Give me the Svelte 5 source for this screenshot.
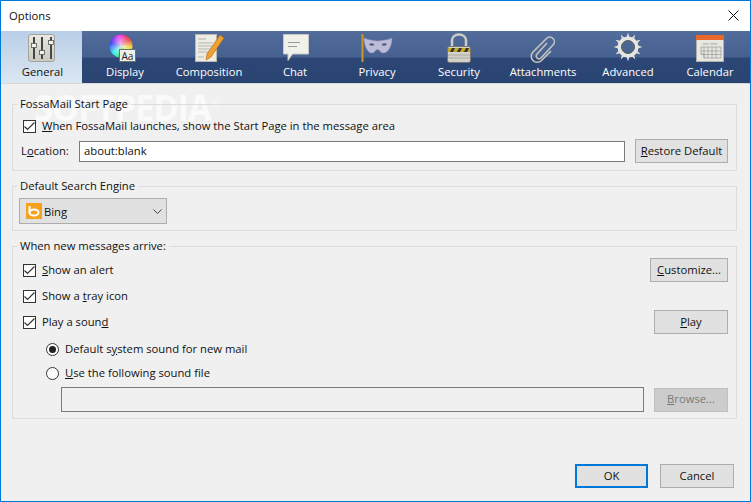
<script>
    // widths keep each icon and label centred where the original toolbar has them
    let tabs = [
        { name: "General", width: 81 },
        { name: "Display", width: 86 },
        { name: "Composition", width: 82 },
        { name: "Chat", width: 90 },
        { name: "Privacy", width: 74 },
        { name: "Security", width: 90 },
        { name: "Attachments", width: 78 },
        { name: "Advanced", width: 92 },
        { name: "Calendar", width: 72 }
    ];

    function point(cx, cy, r, deg) {
        let a = (deg - 90) * Math.PI / 180;
        return (cx + r * Math.cos(a)).toFixed(2) + " " + (cy + r * Math.sin(a)).toFixed(2);
    }

    // colour wheel of the Display tab
    let wedges = [];
    for (let i = 0; i < 24; i++) {
        let from = i * 15;
        wedges.push({
            d: `M12 13L${point(12, 13, 11.5, from)}A11.5 11.5 0 0 1 ${point(12, 13, 11.5, from + 15.5)}Z`,
            fill: `hsl(${(320 + from) % 360} 90% 58%)`
        });
    }

    // teeth of the Advanced gear
    let teeth = "";
    for (let i = 0; i < 12; i++) {
        let deg = i * 30;
        teeth += `M${point(16, 14, 10, deg - 8)}L${point(16, 14, 14.500, deg)}L${point(16, 14, 10, deg + 8)}Z`;
    }
</script>

<div class="window">
    <div class="titlebar">
        <span>Options</span>
        <svg class="close" width="11" height="11" viewBox="0 0 11 11"><path d="M.5.5l10 10M10.5.5l-10 10" stroke="#111" fill="none"/></svg>
    </div>

    <div class="tabs">
        {#each tabs as tab, i}
            <div class="tab" class:active={i === 0} style="width: {tab.width}px">
                <svg width="32" height="32" viewBox="0 0 32 32">
                    {#if tab.name === "General"}
                        <defs>
                            <linearGradient id="plate" x1="0" y1="0" x2="0" y2="1">
                                <stop offset="0" stop-color="#e9e9e2"/>
                                <stop offset="1" stop-color="#c9c9c0"/>
                            </linearGradient>
                        </defs>
                        <rect x="1.500" y="1.500" width="26" height="27" rx="2.500" fill="url(#plate)" stroke="#a2a299"/>
                        <path d="M7 4v22M15 4v22M24 4v22" stroke="#45484a" stroke-width="2"/>
                        <rect x="4.500" y="10.500" width="5" height="4" fill="#f2f2ee" stroke="#55585a" stroke-width=".8"/>
                        <rect x="12.500" y="17.500" width="5" height="4" fill="#f2f2ee" stroke="#55585a" stroke-width=".8"/>
                        <rect x="21.500" y="7.500" width="5" height="4" fill="#f2f2ee" stroke="#55585a" stroke-width=".8"/>
                    {:else if tab.name === "Display"}
                        <defs>
                            <radialGradient id="wheel-core">
                                <stop offset="0" stop-color="#fff" stop-opacity=".75"/>
                                <stop offset="1" stop-color="#fff" stop-opacity="0"/>
                            </radialGradient>
                        </defs>
                        {#each wedges as wedge}
                            <path d={wedge.d} fill={wedge.fill}/>
                        {/each}
                        <circle cx="12" cy="13" r="11.500" fill="url(#wheel-core)"/>
                        <rect x="10.500" y="16.500" width="16" height="12" fill="#efefe9" stroke="#6f6f6a"/>
                        <text x="18.500" y="26.500" class="aa">Aa</text>
                    {:else if tab.name === "Composition"}
                        <rect x="2.500" y="1.500" width="21" height="27" fill="#ecebe4" stroke="#b9b9b2"/>
                        <path d="M5 6h8M5 10h15M5 13h15M5 16h12M5 19h11M5 24h6" stroke="#b5b5ae"/>
                        <path d="M27 2l4 3-13 19-5 3 1-6z" fill="#efa02f" stroke="#a96712" stroke-width=".6"/>
                    {:else if tab.name === "Chat"}
                        <path d="M4.500 1.500h25v19.500h-16l-4.500 6.500v-6.500h-4.500z" fill="#f1f1ec" stroke="#c8c8c2"/>
                        <path d="M9 9.500h12M9 13.500h9" stroke="#9b9b96"/>
                    {:else if tab.name === "Privacy"}
                        <path d="M1.500 1v28" stroke="#c89a24" stroke-width="2"/>
                        <path d="M3 5c6 2.500 9 2 13.500 3C21 7 26 7.500 31 5c0 7-3 15-9 15-3 0-3.500-3.500-5.500-3.500S14 20 11 20C6 20 3 12 3 5z" fill="#bcbcd8" stroke="#8a8ab0" stroke-width=".6"/>
                        <path d="M8 11c2-1.500 4.500-1 5.500 1-2 1.200-4.500 1-5.500-1zM26 11c-2-1.500-4.500-1-5.500 1 2 1.200 4.500 1 5.500-1z" fill="#53597c"/>
                    {:else if tab.name === "Security"}
                        <path d="M9 13V7a7 5.500 0 0 1 14 0v6" fill="none" stroke="#cdcdc6" stroke-width="2.500"/>
                        <rect x="4.500" y="13.500" width="23" height="16" rx="2" fill="#d2d2ca" stroke="#77776f"/>
                        <rect x="5" y="15" width="22" height="4" fill="#c4a726"/>
                        <path d="M9 15l-2 4h3l2-4zM16 15l-2 4h3l2-4zM23 15l-2 4h3l2-4z" fill="#333"/>
                        <path d="M5 22h22M5 25h22" stroke="#aaaaa3"/>
                    {:else if tab.name === "Attachments"}
                        <path d="M20 10L10 21a2.800 2.800 0 0 0 4 4L26 12a4.500 4.500 0 0 0-6.500-6.500L6 19a6 6 0 0 0 8.500 8.500L24 18" fill="none" stroke="#c6c6bf" stroke-width="1.600"/>
                    {:else if tab.name === "Advanced"}
                        <path d={teeth} fill="#e2e2dc"/>
                        <circle cx="16" cy="14" r="8.500" fill="none" stroke="#e6e6e0" stroke-width="4"/>
                        <circle cx="16" cy="14" r="6.500" fill="none" stroke="#5e5e58" stroke-width="1"/>
                    {:else}
                        <rect x="2.500" y="2.500" width="27" height="26" fill="#e8e8e2" stroke="#b0b0aa"/>
                        <rect x="2" y="2" width="28" height="5" fill="#e8672a"/>
                        <text x="16" y="11.500" class="month">mar time</text>
                        <path d="M7 14h20v11H10v-4H7zM7 18h20M7 21.500h20M10 14v11M14 14v11M18 14v11M22 14v11" fill="none" stroke="#a0a0a0" stroke-width=".8"/>
                    {/if}
                </svg>
                <span>{tab.name}</span>
            </div>
        {/each}
    </div>

    <div class="content">
        <div class="watermark">SOFTPEDIA<sup>®</sup></div>

        <fieldset class="start">
            <legend>FossaMail Start Page</legend>
            <label class="check"><span class="box"><svg width="11" height="9" viewBox="0 0 11 9"><path d="M.5 4.500l3 3 7-7" fill="none" stroke="#333" stroke-width="1.200"/></svg></span><span class="text"><u>W</u>hen FossaMail launches, show the Start Page in the message area</span></label>
            <div class="row location">
                <span class="location-label">L<u>o</u>cation:</span>
                <div class="input grow">about:blank</div>
                <button class="restore"><u>R</u>estore Default</button>
            </div>
        </fieldset>

        <fieldset class="search">
            <legend>Default Search Engine</legend>
            <div class="select">
                <svg width="16" height="16" viewBox="0 0 16 16"><rect width="16" height="16" fill="#f5a31c"/><path d="M3.500 3v7" stroke="#fff" stroke-width="2" fill="none"/><ellipse cx="8" cy="9.500" rx="4.500" ry="3" fill="none" stroke="#fff" stroke-width="2"/></svg>
                <span>Bing</span>
                <svg class="chev" width="9" height="5" viewBox="0 0 9 5"><path d="M.5.500l4 4 4-4" fill="none" stroke="#444"/></svg>
            </div>
        </fieldset>

        <fieldset class="messages">
            <legend>When new messages arrive:</legend>
            <div class="row line alert">
                <label class="check"><span class="box"><svg width="11" height="9" viewBox="0 0 11 9"><path d="M.5 4.500l3 3 7-7" fill="none" stroke="#333" stroke-width="1.200"/></svg></span><span class="text"><u>S</u>how an alert</span></label>
                <button class="customize"><u>C</u>ustomize...</button>
            </div>
            <div class="row line tray">
                <label class="check"><span class="box"><svg width="11" height="9" viewBox="0 0 11 9"><path d="M.5 4.500l3 3 7-7" fill="none" stroke="#333" stroke-width="1.200"/></svg></span><span class="text">Show a <u>t</u>ray icon</span></label>
            </div>
            <div class="row line sound">
                <label class="check"><span class="box"><svg width="11" height="9" viewBox="0 0 11 9"><path d="M.5 4.500l3 3 7-7" fill="none" stroke="#333" stroke-width="1.200"/></svg></span><span class="text">Play a soun<u>d</u></span></label>
                <button class="play"><u>P</u>lay</button>
            </div>
            <label class="radio first"><span class="dot on"></span><span class="text">Default s<u>y</u>stem sound for new mail</span></label>
            <label class="radio second"><span class="dot"></span><span class="text"><u>U</u>se the following sound file</span></label>
            <div class="row file">
                <div class="input grow"></div>
                <button class="browse" disabled><u>B</u>rowse...</button>
            </div>
        </fieldset>

        <div class="footer">
            <button class="ok">OK</button>
            <button class="cancel">Cancel</button>
        </div>
    </div>
</div>

<style>
    :global(body) {
        margin: 0;
    }
    .window {
        width: 751px;
        height: 502px;
        box-sizing: border-box;
        border: 1px solid #0078d7;
        display: flex;
        flex-direction: column;
        background: #f0f0f0;
        font-family: "Open Sans", "Noto Sans", sans-serif;
        font-size: 11.25px;
        color: #111;
        overflow: hidden;
    }
    .titlebar {
        height: 30px;
        background: #fff;
        display: flex;
        align-items: center;
        justify-content: space-between;
        padding: 0 11px 2px 8px;
        box-sizing: border-box;
        flex: none;
    }
    .close {
        margin-top: 1px;
    }
    .tabs {
        display: flex;
        height: 52px;
        flex: none;
        background: linear-gradient(#526c9c, #46608f 50%, #2c4675 52%, #2a4472);
    }
    .tab {
        display: flex;
        flex-direction: column;
        align-items: center;
        color: #fff;
        padding-top: 2px;
        box-sizing: border-box;
    }
    .tab svg {
        flex: none;
    }
    .tab span {
        margin-top: -1px;
        line-height: 16px;
    }
    .tab.active {
        background: linear-gradient(#b9cfe8, #dbe6f2);
        color: #111;
        padding-left: 2px;
    }
    .aa {
        font-size: 10px;
        fill: #222;
        text-anchor: middle;
    }
    .month {
        font-size: 3.500px;
        fill: #888;
        text-anchor: middle;
    }
    .content {
        flex: 1;
        position: relative;
        display: flex;
        flex-direction: column;
        padding: 12px 13px 13px 11px;
        border-top: 1px solid #d8d8d8;
    }
    .watermark {
        position: absolute;
        left: 33px;
        top: -2px;
        font-size: 35px;
        line-height: 44px;
        font-weight: 700;
        letter-spacing: -1.5px;
        color: rgba(255, 255, 255, .7);
        pointer-events: none;
        white-space: nowrap;
    }
    .watermark sup {
        font-size: 11px;
        font-weight: 400;
    }
    fieldset {
        position: relative;
        margin: 0;
        border: 1px solid #dcdcdc;
        padding: 0 8px 0 10px;
        min-width: 0;
        box-sizing: border-box;
    }
    legend {
        padding: 0 3px;
        margin-left: -6px;
        line-height: 16px;
    }
    .start {
        height: 75px;
    }
    .search {
        height: 53px;
        margin-top: 7px;
        padding-left: 6px;
    }
    .search legend {
        margin-left: -2px;
    }
    .messages {
        height: 181px;
        margin-top: 7px;
    }
    .check, .radio {
        display: flex;
        align-items: center;
    }
    .text {
        margin-bottom: 2px;
    }
    .box {
        width: 11px;
        height: 11px;
        border: 1px solid #333;
        background: #fff;
        display: flex;
        align-items: center;
        justify-content: center;
        margin-right: 6px;
        flex: none;
    }
    .box svg {
        flex: none;
    }
    .start .check {
        height: 16px;
        margin-top: 6px;
    }
    .row {
        display: flex;
        align-items: center;
    }
    .location {
        margin-top: 5px;
        margin-left: -2px;
    }
    .location-label {
        width: 58px;
        flex: none;
        margin-bottom: 2px;
    }
    .input {
        height: 21px;
        box-sizing: border-box;
        background: #fff;
        border: 1px solid #7a7a7a;
        padding: 0 4px;
        line-height: 18px;
    }
    .grow {
        flex: 1;
    }
    button {
        height: 24px;
        box-sizing: border-box;
        background: #e1e1e1;
        border: 1px solid #adadad;
        font: inherit;
        color: inherit;
        padding: 0 0 2px;
        flex: none;
    }
    .restore {
        width: 93px;
        margin-left: 10px;
    }
    .select {
        width: 148px;
        height: 26px;
        box-sizing: border-box;
        background: #e1e1e1;
        border: 1px solid #adadad;
        display: flex;
        align-items: center;
        padding: 0 4px 0 6px;
        gap: 2px;
        margin-top: 4px;
    }
    .chev {
        margin-left: auto;
    }
    .line {
        justify-content: space-between;
    }
    .alert {
        height: 24px;
        margin-top: 4px;
    }
    .tray {
        height: 16px;
        margin-top: 6px;
    }
    .sound {
        height: 24px;
        margin-top: 6px;
    }
    .customize {
        width: 78px;
    }
    .play {
        width: 74px;
    }
    .radio {
        margin-left: 23px;
        height: 16px;
    }
    .radio.first {
        margin-top: 7px;
    }
    .radio.second {
        margin-top: 8px;
    }
    .dot {
        width: 11px;
        height: 11px;
        border: 1px solid #333;
        border-radius: 50%;
        background: #fff;
        margin-right: 6px;
        position: relative;
        flex: none;
    }
    .dot.on::after {
        content: "";
        position: absolute;
        inset: 2px;
        background: #222;
        border-radius: 50%;
    }
    .file {
        margin-top: 6px;
        margin-left: 38px;
        gap: 10px;
    }
    .file .input {
        height: 25px;
        background: #f0f0f0;
    }
    .browse {
        width: 74px;
        background: #ccc;
        border-color: #bfbfbf;
        color: #7a7a7a;
    }
    .footer {
        margin-top: auto;
        display: flex;
        justify-content: flex-end;
        gap: 12px;
        padding-right: 3px;
    }
    .ok {
        width: 73px;
        border: 2px solid #0078d7;
    }
    .cancel {
        width: 74px;
    }
</style>
